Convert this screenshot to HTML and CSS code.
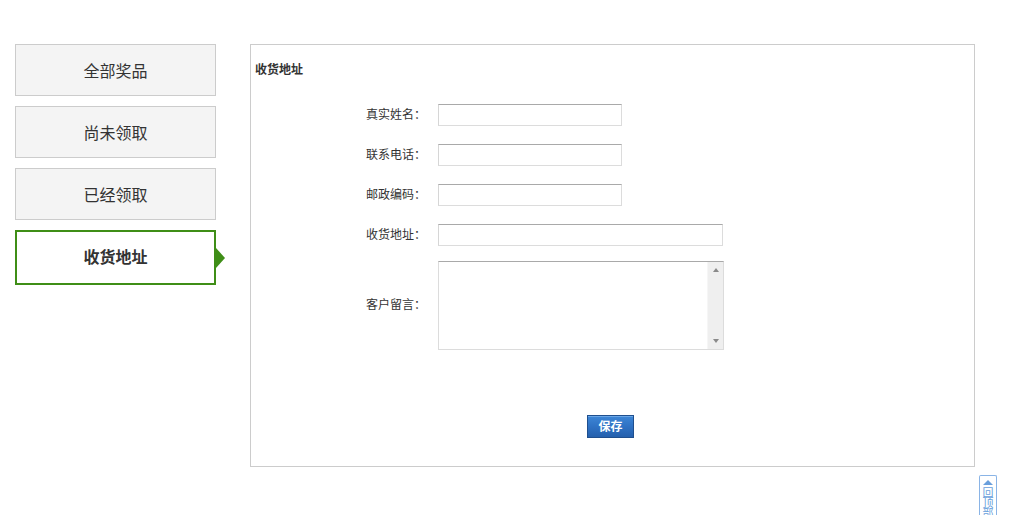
FILE: index.html
```html
<!DOCTYPE html>
<html lang="zh-CN">
<head>
<meta charset="utf-8">
<title>收货地址</title>
<link rel="stylesheet" href="styles.css">
</head>
<body>
<div class="page">
  <ul class="side">
    <li class="tab">全部奖品</li>
    <li class="tab">尚未领取</li>
    <li class="tab">已经领取</li>
    <li class="tab active">收货地址</li>
  </ul>
  <div class="panel">
    <h3 class="title">收货地址</h3>
    <form class="form">
      <div class="row"><label class="lbl">真实姓名：</label><input class="inp" type="text"></div>
      <div class="row"><label class="lbl">联系电话：</label><input class="inp" type="text"></div>
      <div class="row"><label class="lbl">邮政编码：</label><input class="inp" type="text"></div>
      <div class="row"><label class="lbl">收货地址：</label><input class="inp wide" type="text"></div>
      <div class="row"><label class="lbl">客户留言：</label>
        <div class="area">
          <textarea class="ta"></textarea>
          <div class="sbar"><span class="up"></span><span class="down"></span></div>
        </div>
      </div>
      <div class="btnrow"><button type="button" class="btn">保存</button></div>
    </form>
  </div>
</div>
<a class="totop" href="#"><span class="tri"></span><span class="tt">回顶部</span></a>
</body>
</html>
```
FILE: styles.css
```css
* { box-sizing: border-box; }
html, body { margin: 0; padding: 0; background: #fff; }
body {
  font-family: "Noto Sans CJK SC", "Noto Sans", sans-serif;
  color: #333;
  font-size: 12px;
  height: 515px;
  overflow: hidden;
}
.page {
  display: flex;
  align-items: flex-start;
  padding: 44px 0 0 15px;
}
.side {
  list-style: none;
  margin: 0;
  padding: 0;
  width: 201px;
  display: flex;
  flex-direction: column;
  gap: 10px;
}
.tab {
  position: relative;
  height: 52px;
  border: 1px solid #cccccc;
  background: #f4f4f4;
  display: flex;
  align-items: center;
  justify-content: center;
  font-size: 16px;
  line-height: 20px;
  color: #333;
}
.tab.active {
  height: 55px;
  border: 2px solid #3f8e17;
  background: #fff;
  font-weight: bold;
  color: #333;
  padding-bottom: 3px;
}
.tab.active::after {
  content: "";
  position: absolute;
  right: -11px;
  top: 16px;
  border-left: 9px solid #3f8e17;
  border-top: 10px solid transparent;
  border-bottom: 10px solid transparent;
}
.panel {
  margin-left: 34px;
  width: 725px;
  height: 423px;
  border: 1px solid #cccccc;
  padding: 14px 0 0 4px;
}
.title {
  margin: 0;
  font-size: 12px;
  line-height: 20px;
  font-weight: bold;
  color: #333;
}
.form {
  margin: 25px 0 0 91px;
  display: flex;
  flex-direction: column;
  gap: 18px;
}
.row {
  display: flex;
  align-items: center;
}
.row:nth-child(5) { margin-top: -3px; }
.lbl {
  width: 80px;
  text-align: right;
  font-size: 12px;
  line-height: 16px;
  color: #333;
  margin-right: 12px;
  padding-bottom: 3px;
}
.inp {
  width: 184px;
  height: 22px;
  margin: 0;
  padding: 0 3px;
  border: 1px solid #dcdcdc;
  border-top-color: #a9a9a9;
  border-left-color: #d6d6d6;
  background: #fff;
  font-family: inherit;
  font-size: 12px;
  outline: none;
}
.inp.wide { width: 285px; }
.area {
  display: flex;
  width: 286px;
  height: 89px;
  border: 1px solid #dcdcdc;
  border-top-color: #a9a9a9;
  background: #fff;
}
.ta {
  flex: 1;
  border: 0;
  margin: 0;
  padding: 2px;
  resize: none;
  outline: none;
  font-family: inherit;
  font-size: 12px;
}
.sbar {
  width: 16px;
  background: #efefef;
  border-left: 1px solid #f6f6f6;
  display: flex;
  flex-direction: column;
  justify-content: space-between;
  align-items: center;
  padding: 6px 0 6px;
}
.up, .down {
  width: 0;
  height: 0;
  border-left: 3px solid transparent;
  border-right: 3px solid transparent;
}
.up { border-bottom: 4px solid #8a8a8a; }
.down { border-top: 4px solid #8a8a8a; }
.btnrow {
  margin: 47px 0 0 241px;
}
.btn {
  width: 47px;
  height: 23px;
  margin: 0;
  padding: 0 0 2px;
  border: 1px solid #1f4f8e;
  background: linear-gradient(#3d86d6 0%, #2f72c4 50%, #2560ad 100%);
  box-shadow: inset 0 1px 0 #6aa6e6;
  color: #fff;
  font-family: inherit;
  font-size: 12px;
  font-weight: bold;
  line-height: 18px;
  cursor: pointer;
}
.totop {
  position: absolute;
  left: 979px;
  top: 475px;
  width: 18px;
  height: 40px;
  border: 1px solid #8ab4e6;
  border-bottom: 0;
  border-radius: 2px 2px 0 0;
  display: flex;
  flex-direction: column;
  align-items: center;
  text-decoration: none;
  color: #6a9fdc;
  background: #fff;
}
.tri {
  margin-top: 4px;
  width: 0;
  height: 0;
  border-left: 5px solid transparent;
  border-right: 5px solid transparent;
  border-bottom: 5px solid #6a9fdc;
}
.tt {
  width: 11px;
  font-size: 11px;
  line-height: 10px;
  margin-top: 2px;
  word-break: break-all;
}
```
